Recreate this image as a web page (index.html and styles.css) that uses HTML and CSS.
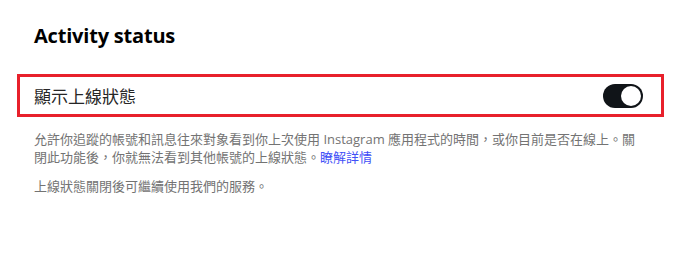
FILE: index.html
```
<!DOCTYPE html>
<html>
<head>
  <meta charset="utf-8">
  <link rel="stylesheet" href="styles.css">
</head>
<body>
  <div class="panel">
    <h2 class="panel-title">Activity status</h2>

    <div class="setting-row">
      <span class="setting-label">顯示上線狀態</span>
      <label class="toggle-switch">
        <input type="checkbox" checked>
        <span class="slider"></span>
      </label>
    </div>

    <p class="help-text">允許你追蹤的帳號和訊息往來對象看到你上次使用 Instagram 應用程式的時間，或你目前是否在線上。關閉此功能後，你就無法看到其他帳號的上線狀態。<a href="#" class="learn-more">瞭解詳情</a></p>
    <p class="help-text">上線狀態關閉後可繼續使用我們的服務。</p>
  </div>
</body>
</html>
```

FILE: styles.css
```
body {
  margin: 0;
  background: #fff;
  font-family: "Open Sans", "Noto Sans CJK TC", sans-serif;
  color: #000;
}

.panel {
  padding: 22px 22px 0 17px;
}

.panel-title {
  margin: 0 0 24px 17px;
  font-size: 20px;
  font-weight: 700;
  line-height: 28px;
  letter-spacing: -0.2px;
}

.setting-row {
  display: flex;
  justify-content: space-between;
  align-items: center;
  height: 37px;
  padding: 0 18px 0 14px;
  border: 3px solid #e8202b;
}

.setting-label {
  font-family: "Noto Sans CJK TC", sans-serif;
  font-size: 17px;
  color: #262626;
}

.toggle-switch {
  position: relative;
  width: 40px;
  height: 24px;
}

.toggle-switch input {
  opacity: 0;
  width: 0;
  height: 0;
}

.slider {
  position: absolute;
  top: 0;
  left: 0;
  right: 0;
  bottom: 0;
  background-color: #dbdbdb;
  border-radius: 12px;
  cursor: pointer;
}

.slider:before {
  position: absolute;
  content: "";
  width: 20px;
  height: 20px;
  left: 2px;
  top: 2px;
  background-color: #fff;
  border-radius: 50%;
}

input:checked + .slider {
  background-color: #101418;
}

input:checked + .slider:before {
  transform: translateX(16px);
}

.help-text {
  margin: 13px 0 0 17px;
  padding-right: 20px;
  font-family: "Open Sans", "Noto Sans CJK TC", sans-serif;
  font-size: 13px;
  line-height: 18px;
  color: #737373;
}

.help-text + .help-text {
  margin-top: 11px;
}

.learn-more {
  color: #4150f7;
  text-decoration: none;
}
```
